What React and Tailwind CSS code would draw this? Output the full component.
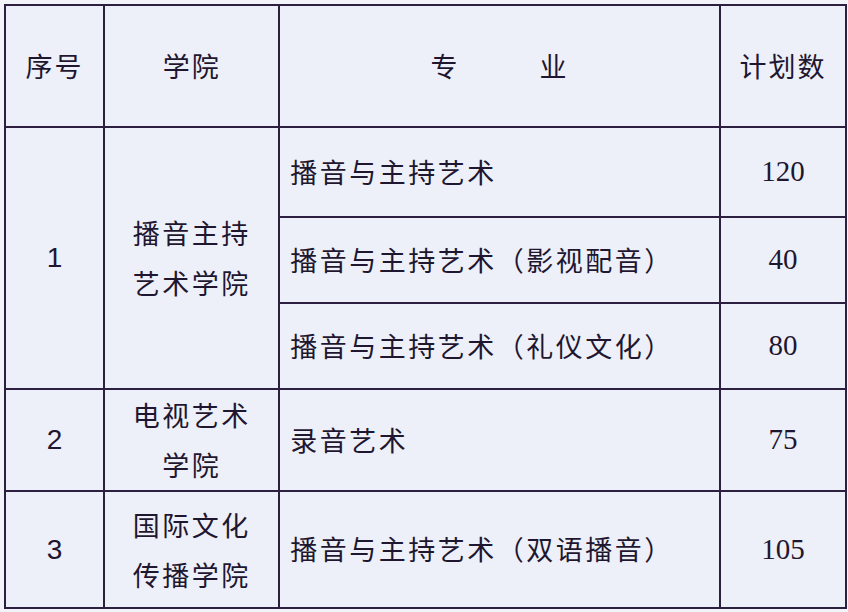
import React from 'react';

const cjk = { fontFamily: '"Noto Sans CJK SC", "Noto Sans", sans-serif' };

const rows = [
  { no: '1', school: ['播音主持', '艺术学院'], span: 3, major: '播音与主持艺术', count: '120', h: 'h-[90px]' },
  { major: '播音与主持艺术（影视配音）', count: '40', h: 'h-[86px]' },
  { major: '播音与主持艺术（礼仪文化）', count: '80', h: 'h-[86px]' },
  { no: '2', school: ['电视艺术', '学院'], span: 1, major: '录音艺术', count: '75', h: 'h-[99px]' },
  { no: '3', school: ['国际文化', '传播学院'], span: 1, major: '播音与主持艺术（双语播音）', count: '105', h: 'h-[117px]' },
];

const cell = 'border-2 border-[#2d1f3f] text-[#1f1630]';

export default function App() {
  return (
    <div className="w-[848px] h-[612px] bg-[#f3f4f9] pt-[4px] pl-[4px] overflow-hidden">
      <table className="border-collapse bg-[#edf0f8] table-fixed w-[843px]" style={cjk}>
        <colgroup>
          <col className="w-[99px]" />
          <col className="w-[175px]" />
          <col className="w-[440px]" />
          <col className="w-[126px]" />
        </colgroup>
        <thead>
          <tr className="h-[122px] text-[27px] tracking-[2px]">
            <th className={`${cell} font-normal text-center`}>序号</th>
            <th className={`${cell} font-normal text-center`}>学院</th>
            <th className={`${cell} font-normal text-center`}>
              <span className="pr-[80px]">专</span>业
            </th>
            <th className={`${cell} font-normal text-center`}>计划数</th>
          </tr>
        </thead>
        <tbody>
          {rows.map((r, i) => (
            <tr key={i} className={r.h}>
              {r.no && (
                <td
                  rowSpan={r.span}
                  className={`${cell} text-center text-[28px]`}
                  style={{ fontFamily: '"Liberation Sans", Arial, sans-serif' }}
                >
                  {r.no}
                </td>
              )}
              {r.school && (
                <td rowSpan={r.span} className={`${cell} text-center text-[27px] leading-[50px] tracking-[2.5px]`}>
                  {r.school.map((s) => (
                    <div key={s}>{s}</div>
                  ))}
                </td>
              )}
              <td className={`${cell} pl-[10px] text-[27px] tracking-[2.5px]`}>{r.major}</td>
              <td
                className={`${cell} text-center text-[29px]`}
                style={{ fontFamily: '"Liberation Serif", "Times New Roman", serif' }}
              >
                {r.count}
              </td>
            </tr>
          ))}
        </tbody>
      </table>
    </div>
  );
}
